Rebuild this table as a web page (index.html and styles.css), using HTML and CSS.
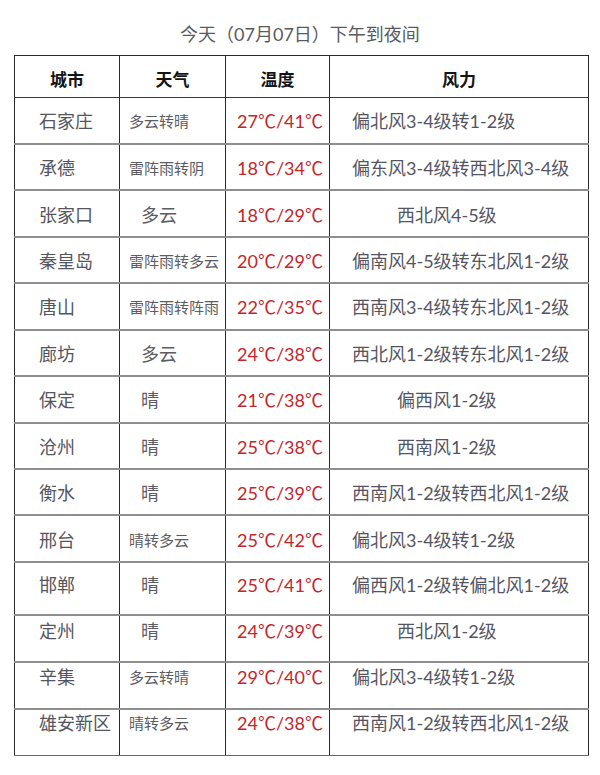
FILE: index.html
```html
<!DOCTYPE html>
<html lang="zh-CN">
<head>
<meta charset="utf-8">
<title>今天（07月07日）下午到夜间</title>
<link rel="stylesheet" href="styles.css">
</head>
<body>
<div class="page">
  <h1 class="title">今天（07月07日）下午到夜间</h1>
  <table class="wx">
    <colgroup>
      <col class="c-city"><col class="c-wx"><col class="c-temp"><col class="c-wind">
    </colgroup>
    <thead>
      <tr class="head"><th>城市</th><th>天气</th><th>温度</th><th>风力</th></tr>
    </thead>
    <tbody>
      <tr class="r"><td class="city">石家庄</td><td class="ws">多云转晴</td><td class="temp">27℃/41℃</td><td class="wind">偏北风3-4级转1-2级</td></tr>
      <tr class="r"><td class="city">承德</td><td class="ws">雷阵雨转阴</td><td class="temp">18℃/34℃</td><td class="wind">偏东风3-4级转西北风3-4级</td></tr>
      <tr class="r"><td class="city">张家口</td><td class="wl">多云</td><td class="temp">18℃/29℃</td><td class="wind wi">西北风4-5级</td></tr>
      <tr class="r"><td class="city">秦皇岛</td><td class="ws">雷阵雨转多云</td><td class="temp">20℃/29℃</td><td class="wind">偏南风4-5级转东北风1-2级</td></tr>
      <tr class="r"><td class="city">唐山</td><td class="ws">雷阵雨转阵雨</td><td class="temp">22℃/35℃</td><td class="wind">西南风3-4级转东北风1-2级</td></tr>
      <tr class="r"><td class="city">廊坊</td><td class="wl">多云</td><td class="temp">24℃/38℃</td><td class="wind">西北风1-2级转东北风1-2级</td></tr>
      <tr class="r"><td class="city">保定</td><td class="wl">晴</td><td class="temp">21℃/38℃</td><td class="wind wi">偏西风1-2级</td></tr>
      <tr class="r"><td class="city">沧州</td><td class="wl">晴</td><td class="temp">25℃/38℃</td><td class="wind wi">西南风1-2级</td></tr>
      <tr class="r"><td class="city">衡水</td><td class="wl">晴</td><td class="temp">25℃/39℃</td><td class="wind">西南风1-2级转西北风1-2级</td></tr>
      <tr class="r"><td class="city">邢台</td><td class="ws">晴转多云</td><td class="temp">25℃/42℃</td><td class="wind">偏北风3-4级转1-2级</td></tr>
      <tr class="r tall up1"><td class="city">邯郸</td><td class="wl">晴</td><td class="temp">25℃/41℃</td><td class="wind">偏西风1-2级转偏北风1-2级</td></tr>
      <tr class="r r47 up2"><td class="city">定州</td><td class="wl">晴</td><td class="temp">24℃/39℃</td><td class="wind wi">西北风1-2级</td></tr>
      <tr class="r r47 up3"><td class="city">辛集</td><td class="ws">多云转晴</td><td class="temp">29℃/40℃</td><td class="wind">偏北风3-4级转1-2级</td></tr>
      <tr class="r up4"><td class="city">雄安新区</td><td class="ws">晴转多云</td><td class="temp">24℃/38℃</td><td class="wind">西南风1-2级转西北风1-2级</td></tr>
    </tbody>
  </table>
</div>
</body>
</html>
```
FILE: styles.css
```css
html, body {
  margin: 0;
  padding: 0;
  background: #ffffff;
}
body {
  font-family: "Lato", "Noto Sans CJK SC", sans-serif;
  color: #555558;
}
.page {
  width: 600px;
  padding-top: 0;
}
.title {
  margin: 0;
  height: 55px;
  padding-top: 0;
  box-sizing: border-box;
  display: flex;
  align-items: center;
  justify-content: center;
  padding-left: 0;
  padding-top: 10px;
  font-size: 18px;
  font-weight: 400;
  color: #5a5a5e;
  letter-spacing: 0;
}
.wx {
  margin-left: 14px;
  width: 574px;
  border-collapse: collapse;
  table-layout: fixed;
  border: 1px solid #2a2a2a;
}
.c-city { width: 105px; }
.c-wx { width: 106px; }
.c-temp { width: 104px; }
.c-wind { width: 259px; }
.wx th, .wx td {
  border-left: 1px solid #2a2a2a;
  border-right: 1px solid #2a2a2a;
  padding: 0;
  white-space: nowrap;
  overflow: visible;
}
.head {
  height: 42px;
}
.head th {
  font-size: 17px;
  font-weight: 700;
  color: #141414;
  text-align: center;
  vertical-align: middle;
  padding-top: 3px;
  border-bottom: 1px solid #3a3a3a;
}
.r {
  height: 46.45px;
}
.r td {
  border-bottom: 2px solid #8e8e8e;
  vertical-align: middle;
  padding-top: 2px;
  padding-bottom: 0;
  font-size: 18px;
  line-height: 24px;
}
.r:last-child td {
  border-bottom: 1px solid #6a6a6a;
}
.tall { height: 53px; }
.r47 { height: 47px; }
.up1 td { padding-top: 0; padding-bottom: 6px; }
.up2 td { padding-top: 0; padding-bottom: 14px; }
.up3 td { padding-top: 0; padding-bottom: 16px; }
.up4 td { padding-top: 0; padding-bottom: 18px; }
.city {
  padding-left: 24px !important;
  text-align: left;
  color: #555560;
}
.ws {
  font-size: 15px !important;
  padding-left: 9px !important;
  color: #5c5c62;
}
.wl {
  padding-left: 21px !important;
  color: #5c5c62;
}
.temp {
  color: #c4262c;
  text-align: left;
  padding-left: 11px !important;
}
.wind {
  padding-left: 22px !important;
  color: #555562;
}
.wi {
  padding-left: 67px !important;
}
```
